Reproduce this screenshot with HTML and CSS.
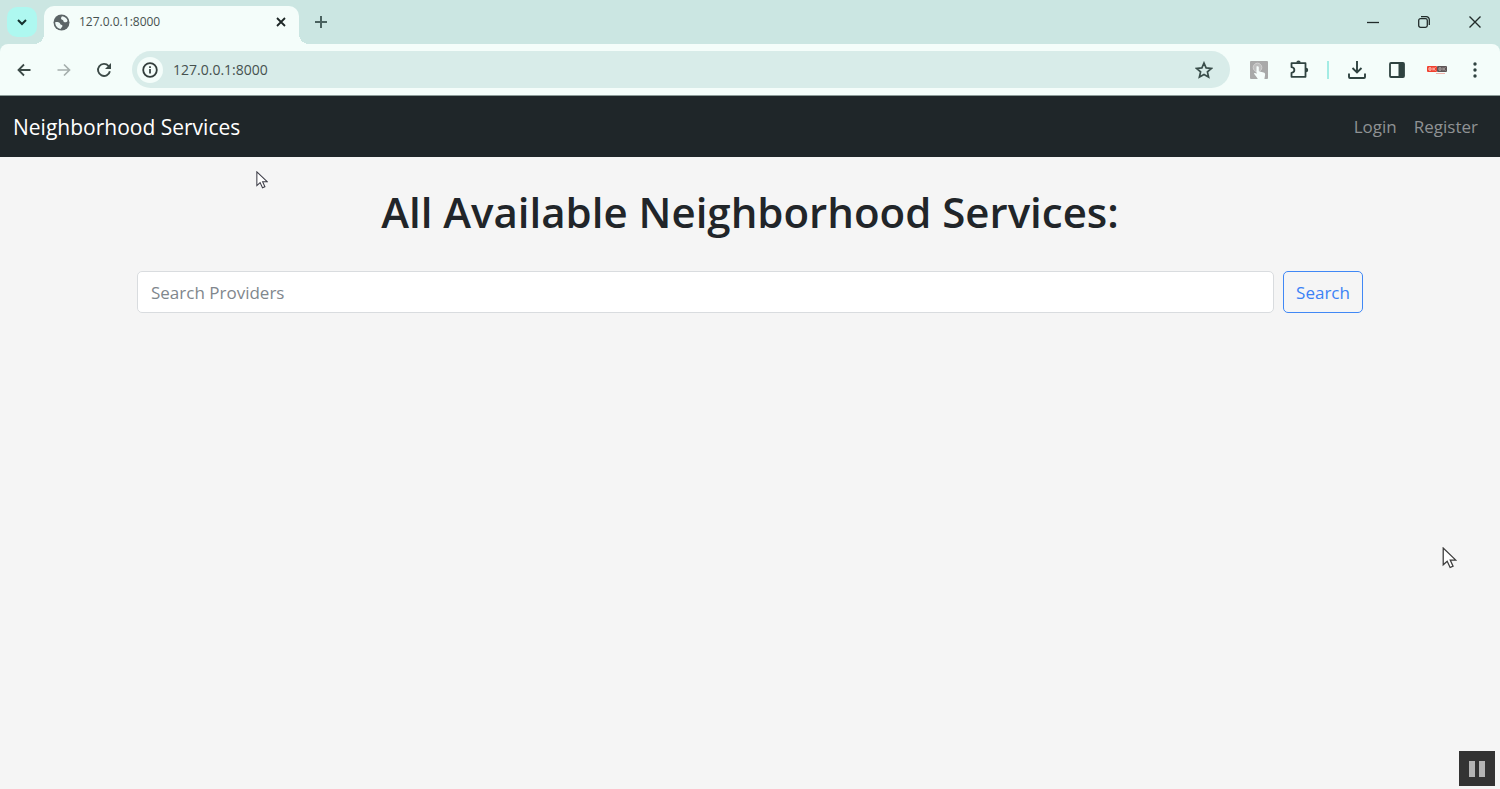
FILE: index.html
```html
<!DOCTYPE html>
<html lang="en">
<head>
  <meta charset="UTF-8">
  <title>Neighborhood Services</title>
  <link rel="stylesheet" href="styles.css">
</head>
<body>
  <div class="browser">
    <div class="tab-strip">
      <button class="tab-search" aria-label="Search tabs">
        <svg width="12" height="12" viewBox="0 0 12 12"><path d="M2 4l4 4 4-4" fill="none" stroke="#14302d" stroke-width="2"/></svg>
      </button>
      <div class="tab">
        <svg width="17" height="17" viewBox="0 0 17 17">
          <circle cx="8.5" cy="8.5" r="8" fill="#5b6466"/>
          <path d="M9 2.3c2.8.2 5 2 5.600 4.600-.8 1.400-2.400 1.700-3.600 1.100-.8-.5-.4-1.700-1.400-2-1.300-.3-1.700-.9-1.500-1.900.1-.8.400-1.300.9-1.800zM2.200 8.200c1.600-.3 3.600-.1 4.500.9.700.8.400 1.500 1.500 1.700 1.200.2 1.600.9 1 1.900-.5.800-1.300 1.100-1.200 2.100-3.300-.1-5.900-3-5.800-6.600z" fill="#eef8f6"/>
        </svg>
        <span class="tab-title">127.0.0.1:8000</span>
        <button class="tab-close" aria-label="Close tab">
          <svg width="12" height="12" viewBox="0 0 12 12"><path d="M2 2l8 8M10 2l-8 8" stroke="#1c2625" stroke-width="1.800"/></svg>
        </button>
      </div>
      <button class="new-tab" aria-label="New tab">
        <svg width="12" height="12" viewBox="0 0 12 12"><path d="M6 0v12M0 6h12" stroke="#4a625f" stroke-width="2"/></svg>
      </button>
      <div class="window-controls">
        <button aria-label="Minimize">
          <svg width="12" height="12" viewBox="0 0 12 12"><path d="M0 6.500h12" stroke="#222c2b" stroke-width="1.300"/></svg>
        </button>
        <button aria-label="Restore">
          <svg width="12" height="12" viewBox="0 0 12 12" fill="none" stroke="#222c2b" stroke-width="1.300"><rect x=".7" y="2.700" width="8.600" height="8.600" rx="1.800"/><path d="M3 .7h5.300a3 3 0 0 1 3 3V9"/></svg>
        </button>
        <button aria-label="Close">
          <svg width="12" height="12" viewBox="0 0 12 12"><path d="M.5.5l11 11M11.500.5l-11 11" stroke="#222c2b" stroke-width="1.400"/></svg>
        </button>
      </div>
    </div>

    <div class="toolbar">
      <button class="tool" aria-label="Back">
        <svg width="16" height="16" viewBox="0 0 16 16"><path d="M14.500 8H2.500M8 2.500L2.500 8 8 13.500" fill="none" stroke="#3c4a47" stroke-width="1.800"/></svg>
      </button>
      <button class="tool" aria-label="Forward">
        <svg width="16" height="16" viewBox="0 0 16 16"><path d="M1.500 8h12M8 2.500l5.500 5.500L8 13.500" fill="none" stroke="#a5afad" stroke-width="1.700"/></svg>
      </button>
      <button class="tool" aria-label="Reload">
        <svg width="16" height="16" viewBox="0 0 16 16"><path d="M13.900 9.200A6 6 0 1 1 12.600 4L14 5.500" fill="none" stroke="#3c4a47" stroke-width="1.900"/><path d="M15 1v6H9z" fill="#3c4a47"/></svg>
      </button>
      <div class="omnibox">
        <button class="site-info" aria-label="View site information">
          <svg width="16" height="16" viewBox="0 0 16 16"><circle cx="8" cy="8" r="6.800" fill="none" stroke="#323d3b" stroke-width="1.800"/><path d="M8 7v4.500M8 4.300v1.800" stroke="#323d3b" stroke-width="1.700"/></svg>
        </button>
        <input class="address" type="text" value="127.0.0.1:8000" aria-label="Address">
        <button class="star" aria-label="Bookmark this page">
          <svg width="18" height="18" viewBox="0 0 18 18"><path d="M9 2l2.100 4.900 5.300.5-4 3.500 1.200 5.200L9 13.400l-4.600 2.700 1.200-5.200-4-3.500 5.300-.5z" fill="none" stroke="#3a4e4b" stroke-width="1.700"/></svg>
        </button>
      </div>
      <button class="tool" aria-label="Click extension">
        <svg width="18" height="18" viewBox="0 0 18 18"><rect width="18" height="18" rx="1" fill="#a9a9a9"/><circle cx="7.500" cy="6.500" r="4.300" fill="#bdbdbd" stroke="#d2d2d2"/><path d="M6.500 5.500c1-.7 2.300 0 2.300 1v3.800l4.700 1.200c1.200.4 1.800 1 1.600 2.200L14.400 18H7.800c-1-2-3-4-3.800-5.500.8-.9 1.800-.4 2.500.5z" fill="#f6fdfb"/></svg>
      </button>
      <button class="tool" aria-label="Extensions">
        <svg width="20" height="20" viewBox="0 0 20 20"><path d="M2.500 3.200h14v13.600h-14v-4c3.800-.5 3.800-5.100 0-5.600z" fill="none" stroke="#2f4340" stroke-width="1.800" stroke-linejoin="round"/><path d="M7.300 2.800a2.200 2.200 0 0 1 4.400 0zM17 7.800a2.200 2.200 0 0 1 0 4.400z" fill="#2f4340"/></svg>
      </button>
      <span class="separator"></span>
      <button class="tool" aria-label="Downloads">
        <svg width="18" height="18" viewBox="0 0 18 18"><path d="M9 0v11.500M4.500 7L9 11.500 13.500 7M1 12.500V16q0 1 1 1h14q1 0 1-1v-3.500" fill="none" stroke="#2f4340" stroke-width="1.900"/></svg>
      </button>
      <button class="tool" aria-label="Side panel">
        <svg width="18" height="18" viewBox="0 0 18 18"><rect x="2" y="2" width="14" height="14" rx="1" fill="none" stroke="#2f4340" stroke-width="1.800"/><path d="M10.500 2H16v14h-5.500z" fill="#2f4340"/></svg>
      </button>
      <button class="tool" aria-label="Profile">
        <svg width="20" height="10" viewBox="0 0 20 10"><rect y="1" width="10" height="6" rx="1" fill="#f0412f"/><rect x="10" y="1" width="10" height="6" rx="1" fill="#5e5556"/><path d="M9 8.500h9" stroke="#f3b4ac"/><path d="M2 2.800h2v2.400H2zM6 2.500v3M8.500 2.500L6.500 4l2 1.500" fill="none" stroke="#ffd0ca" stroke-width=".9"/><path d="M12 2.800h2v2.400h-2zM16 2.500v3M18.500 2.500L16.500 4l2 1.500" fill="none" stroke="#b5adad" stroke-width=".9"/></svg>
      </button>
      <button class="tool menu" aria-label="Menu">
        <svg width="4" height="18" viewBox="0 0 4 18" fill="#2f4340"><circle cx="2" cy="3" r="1.700"/><circle cx="2" cy="9" r="1.700"/><circle cx="2" cy="15" r="1.700"/></svg>
      </button>
    </div>
  </div>

  <nav class="navbar">
    <a class="brand" href="#">Neighborhood Services</a>
    <div class="nav-links">
      <a href="#">Login</a>
      <a href="#">Register</a>
    </div>
  </nav>

  <main class="container">
    <h1>All Available Neighborhood Services:</h1>
    <form class="search-form">
      <input class="search-input" type="search" placeholder="Search Providers" aria-label="Search Providers">
      <button class="search-btn" type="submit">Search</button>
    </form>
  </main>

  <svg class="cursor cursor-small" width="12" height="18" viewBox="0 0 14 21"><path d="M1 1v16l3.800-3.400 2.800 6 2.800-1.300-2.700-5.800H13z" fill="#fff" stroke="#3b3b45" stroke-width="1.200"/></svg>
  <svg class="cursor cursor-large" width="15" height="22" viewBox="0 0 14 21"><path d="M1 1v16l3.800-3.400 2.800 6 2.800-1.300-2.700-5.800H13z" fill="#fff" stroke="#3b3b3b" stroke-width="1.200"/></svg>

  <button class="pause-btn" aria-label="Pause">
    <svg width="16" height="16" viewBox="0 0 16 16" fill="#b4b4b4"><path d="M0 0h6v16H0zM10 0h6v16h-6z"/></svg>
  </button>
</body>
</html>
```
FILE: styles.css
```css
* {
  box-sizing: border-box;
}

body {
  margin: 0;
  min-height: 100vh;
  font-family: "Open Sans", "Segoe UI", sans-serif;
  font-size: 17px;
  line-height: 26px;
  color: #212529;
  background: #f5f5f5;
}

button {
  display: flex;
  align-items: center;
  justify-content: center;
  flex-shrink: 0;
  padding: 0;
  border: none;
  background: none;
  font-family: inherit;
  cursor: pointer;
}

svg {
  flex-shrink: 0;
}

/* browser bar */
.browser {
  background: #cbe6e2;
}

.tab-strip {
  display: flex;
  height: 44px;
  padding-left: 7px;
}

.tab-search {
  width: 30px;
  height: 30px;
  margin: 7px 7px 0 0;
  border-radius: 10px;
  background: #aef8f0;
}

.tab {
  position: relative;
  display: flex;
  align-items: center;
  gap: 9px;
  width: 255px;
  height: 38px;
  margin-top: 6px;
  padding: 0 9px 6px;
  border-radius: 10px 10px 0 0;
  background: #f4fdfa;
}

/* curved feet of the active tab */
.tab::before,
.tab::after {
  content: "";
  position: absolute;
  bottom: 0;
  width: 10px;
  height: 10px;
}

.tab::before {
  right: 100%;
  background: radial-gradient(circle at 0 0, transparent 10px, #f4fdfa 10px);
}

.tab::after {
  left: 100%;
  background: radial-gradient(circle at 100% 0, transparent 10px, #f4fdfa 10px);
}

.tab-title {
  flex: 1;
  font-size: 12px;
  color: #46514f;
}

.tab-close {
  width: 18px;
  height: 18px;
}

.new-tab {
  width: 28px;
  height: 28px;
  margin: 8px 0 0 8px;
}

.window-controls {
  display: flex;
  margin-left: auto;
}

.window-controls button {
  width: 51px;
  height: 44px;
}

.toolbar {
  display: flex;
  align-items: center;
  gap: 4px;
  height: 52px;
  padding: 0 7px 0 6px;
  border-bottom: 1px solid #8b9b98;
  border-radius: 8px 8px 0 0;
  background: #f4fdfa;
}

.tool {
  width: 36px;
  height: 36px;
}

.menu {
  margin-left: -2px;
}

.omnibox {
  display: flex;
  align-items: center;
  flex: 1;
  height: 37px;
  margin: 0 7px 0 6px;
  padding: 0 13px 0 5px;
  border-radius: 19px;
  background: #d8ece9;
}

.site-info {
  width: 26px;
  height: 26px;
  border-radius: 50%;
  background: #f4fdfa;
}

.address {
  flex: 1;
  min-width: 0;
  padding: 0 10px;
  border: none;
  outline: none;
  background: none;
  font-family: inherit;
  font-size: 14px;
  color: #46514f;
}

.star {
  width: 26px;
  height: 26px;
}

.separator {
  width: 2px;
  height: 18px;
  margin: 0 6px;
  background: #a3ece4;
}

/* site */
.navbar {
  display: flex;
  align-items: center;
  justify-content: space-between;
  height: 61px;
  padding: 0 22px 0 13px;
  background: #1f2629;
}

.navbar a {
  text-decoration: none;
}

.brand {
  font-size: 21px;
  color: #fff;
}

.nav-links {
  display: flex;
  gap: 17px;
}

.nav-links a {
  color: #8f9294;
}

.container {
  max-width: 1252px;
  margin: 0 auto;
  padding: 29px 13px 0;
}

h1 {
  margin: 0 0 33px;
  font-size: 42px;
  font-weight: 600;
  line-height: 52px;
  text-align: center;
}

.search-form {
  display: flex;
  gap: 9px;
}

.search-input {
  flex: 1;
  min-width: 0;
  height: 42px;
  padding: 0 13px;
  border: 1px solid #d9dcdf;
  border-radius: 5px;
  outline: none;
  background: #fff;
  font-family: inherit;
  font-size: 17px;
  color: #212529;
}

.search-input::placeholder {
  color: #7f878d;
  opacity: 1;
}

.search-btn {
  width: 80px;
  height: 42px;
  border: 1px solid #4088f5;
  border-radius: 5px;
  font-size: 17px;
  color: #3b82f6;
}

.search-btn:hover {
  background: #3b82f6;
  color: #fff;
}

/* recording overlay */
.cursor {
  position: absolute;
  pointer-events: none;
}

.cursor-small {
  left: 256px;
  top: 171px;
}

.cursor-large {
  right: 43px;
  top: 547px;
}

.pause-btn {
  position: fixed;
  right: 5px;
  bottom: 3px;
  width: 36px;
  height: 35px;
  background: #333;
}
```
